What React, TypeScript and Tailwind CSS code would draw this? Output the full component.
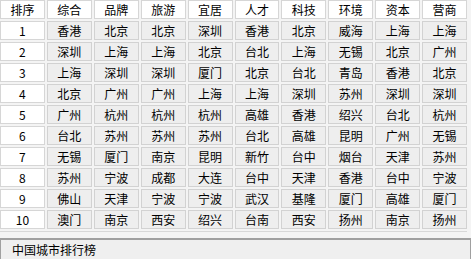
import React from "react";

const headers = ["排序", "综合", "品牌", "旅游", "宜居", "人才", "科技", "环境", "资本", "营商"];
const rows = [
  ["香港", "北京", "北京", "深圳", "香港", "北京", "威海", "上海", "上海"],
  ["深圳", "上海", "上海", "北京", "台北", "上海", "无锡", "北京", "广州"],
  ["上海", "深圳", "深圳", "厦门", "北京", "台北", "青岛", "香港", "北京"],
  ["北京", "广州", "广州", "上海", "上海", "深圳", "苏州", "深圳", "深圳"],
  ["广州", "杭州", "杭州", "杭州", "高雄", "香港", "绍兴", "台北", "杭州"],
  ["台北", "苏州", "苏州", "苏州", "台北", "高雄", "昆明", "广州", "无锡"],
  ["无锡", "厦门", "南京", "昆明", "新竹", "台中", "烟台", "天津", "苏州"],
  ["苏州", "宁波", "成都", "大连", "台中", "天津", "香港", "台中", "宁波"],
  ["佛山", "天津", "宁波", "宁波", "武汉", "基隆", "厦门", "高雄", "厦门"],
  ["澳门", "南京", "西安", "绍兴", "台南", "西安", "扬州", "南京", "扬州"],
];

export default function App() {
  const font = { fontFamily: '"Noto Sans CJK SC", "DejaVu Sans", sans-serif' };
  return (
    <div className="w-[471px] h-[259px] bg-[#f4f4f4] text-black text-[12px] leading-none overflow-hidden" style={font}>
      <div className="w-[467px] grid grid-cols-10 gap-[2px]">
        {headers.map((h) => (
          <div key={h} className="h-[19px] bg-white border border-[#d6d6d6] flex items-center justify-center">
            {h}
          </div>
        ))}
        {rows.map((r, i) => (
          <React.Fragment key={i}>
            <div className="h-[19px] bg-white border border-[#d6d6d6] flex items-center justify-center">{i + 1}</div>
            {r.map((c, j) => (
              <div key={j} className="h-[19px] bg-[#eeeeee] border border-[#d2d2d2] flex items-center justify-center">
                {c}
              </div>
            ))}
          </React.Fragment>
        ))}
      </div>
      <div className="mt-[2px] h-[2px] w-[467px] border-t border-[#d8d8d8]"></div>
      <div className="mt-[5px] h-[22px] w-[471px] bg-[#efefef] border-t-2 border-l border-r border-[#a0a0a0] flex items-center pl-[11px]">
        中国城市排行榜
      </div>
    </div>
  );
}
